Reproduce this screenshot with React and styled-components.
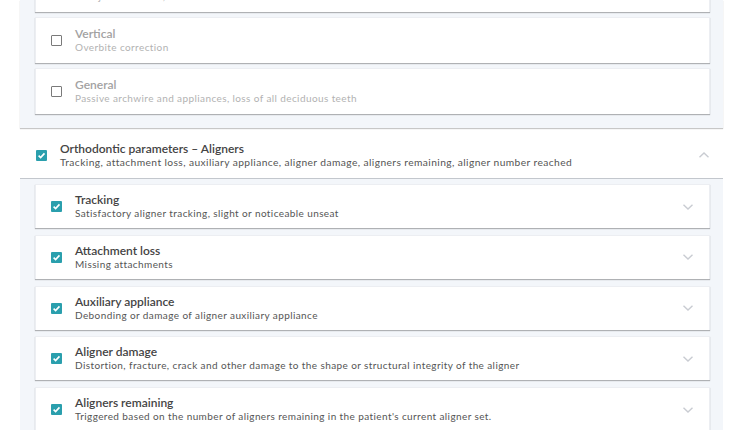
import React from 'react';
import styled, { createGlobalStyle } from 'styled-components';

const GlobalStyle = createGlobalStyle`
  html, body {
    margin: 0;
    padding: 0;
    background: #ffffff;
    font-family: Lato, "Open Sans", "Liberation Sans", sans-serif;
  }
`;

const topItems = [
  { title: 'Sagittal', text: 'Overjet correction, Class II or Class III correction' },
  { title: 'Vertical', text: 'Overbite correction' },
  { title: 'General', text: 'Passive archwire and appliances, loss of all deciduous teeth' },
];

const alignerItems = [
  { title: 'Tracking', text: 'Satisfactory aligner tracking, slight or noticeable unseat' },
  { title: 'Attachment loss', text: 'Missing attachments' },
  { title: 'Auxiliary appliance', text: 'Debonding or damage of aligner auxiliary appliance' },
  { title: 'Aligner damage', text: 'Distortion, fracture, crack and other damage to the shape or structural integrity of the aligner' },
  { title: 'Aligners remaining', text: "Triggered based on the number of aligners remaining in the patient's current aligner set." },
];

const Checkbox = ({ checked }) => (
  <Box checked={checked}>
    {checked && (
      <svg width="9" height="9" viewBox="0 0 10 10">
        <path d="M1.8 5.2 L4 7.3 L8.3 2.6" fill="none" stroke="#fff" strokeWidth="1.8" />
      </svg>
    )}
  </Box>
);

const Chevron = ({ up }) => (
  <ChevronIcon width="12" height="8" viewBox="0 0 12 8" up={up}>
    <path d="M1.5 1.8 L6 6 L10.5 1.8" fill="none" stroke="#c9ccd2" strokeWidth="1.4" />
  </ChevronIcon>
);

const App = () => {
  return (
    <Page>
      <GlobalStyle />
      <Panel bottom>
        <CardList top>
          {topItems.map((item, i) => (
            <Card key={item.title} tall first={i === 0}>
              <Checkbox />
              <Texts>
                <Title muted>{item.title}</Title>
                <Sub muted>{item.text}</Sub>
              </Texts>
            </Card>
          ))}
        </CardList>
      </Panel>
      <Header>
        <Checkbox checked />
        <Texts>
          <Title>Orthodontic parameters – Aligners</Title>
          <Sub large>Tracking, attachment loss, auxiliary appliance, aligner damage, aligners remaining, aligner number reached</Sub>
        </Texts>
        <Chevron up />
      </Header>
      <Panel>
        <CardList>
          {alignerItems.map((item) => (
            <Card key={item.title}>
              <Checkbox checked />
              <Texts>
                <Title>{item.title}</Title>
                <Sub>{item.text}</Sub>
              </Texts>
              <Chevron />
            </Card>
          ))}
        </CardList>
      </Panel>
    </Page>
  );
};

const Page = styled.div`
  width: 750px;
  height: 430px;
  overflow: hidden;
  padding-left: 20px;
  box-sizing: border-box;
`;

const Panel = styled.div`
  width: 703px;
  background: #f3f6fa;
  padding: ${(p) => (p.bottom ? '0 13px 14px 15px' : '5px 13px 0 15px')};
  box-sizing: border-box;
  box-shadow: ${(p) => (p.bottom ? '0 1px 1px rgba(0, 0, 0, 0.22)' : 'none')};
  margin-bottom: ${(p) => (p.bottom ? '3px' : '0')};
`;

const CardList = styled.div`
  display: flex;
  flex-direction: column;
  gap: ${(p) => (p.top ? '5px' : '6.75px')};
`;

const Card = styled.div`
  display: flex;
  align-items: center;
  height: ${(p) => (p.tall ? '46px' : '44px')};
  margin-top: ${(p) => (p.first ? '-34px' : '0')};
  padding: 0 15px 0 15px;
  background: #ffffff;
  border: 1px solid #eceef2;
  border-bottom: none;
  box-shadow: 0 1px 1px rgba(0, 0, 0, 0.28);
  box-sizing: border-box;
`;

const Header = styled.div`
  display: flex;
  align-items: center;
  width: 703px;
  height: 48px;
  padding: 1px 13px 0 16px;
  background: #ffffff;
  border-bottom: 1px solid #c3c7cd;
  box-sizing: border-box;
`;

const Box = styled.span`
  flex: none;
  display: flex;
  align-items: center;
  justify-content: center;
  width: 11px;
  height: 11px;
  box-sizing: border-box;
  border: ${(p) => (p.checked ? 'none' : '1.2px solid #7a7a7a')};
  border-radius: 1px;
  background: ${(p) => (p.checked ? '#2a9fad' : '#ffffff')};
  margin-right: 13px;
`;

const Texts = styled.div`
  flex: 1;
  display: flex;
  flex-direction: column;
  min-width: 0;
`;

const Title = styled.div`
  font-size: 12px;
  line-height: 14px;
  font-weight: 600;
  color: ${(p) => (p.muted ? '#a2a2a2' : '#444444')};
`;

const Sub = styled.div`
  font-size: ${(p) => (p.large ? '10.25px' : '10px')};
  line-height: 13px;
  letter-spacing: 0.4px;
  color: ${(p) => (p.muted ? '#b2b2b2' : '#555555')};
  white-space: nowrap;
`;

const ChevronIcon = styled.svg`
  flex: none;
  transform: ${(p) => (p.up ? 'rotate(180deg)' : 'none')};
`;

export default App;
